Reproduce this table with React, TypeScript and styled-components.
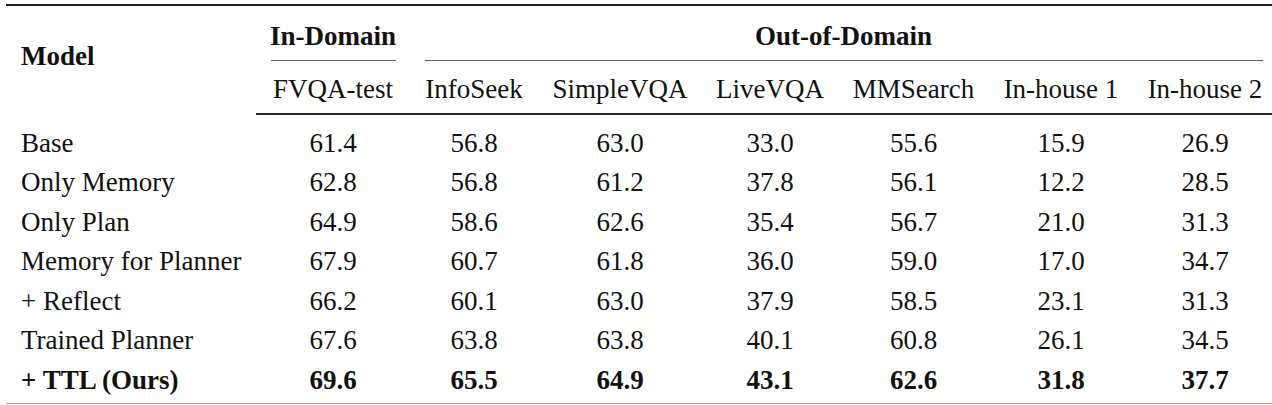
import React from 'react';
import styled, { createGlobalStyle } from 'styled-components';

type Row = {
  model: string;
  scores: string[];
  best?: boolean;
};

// 열 너비 (LaTeX 표의 열 간격을 맞춤)
const columnWidths = [250, 154, 128, 164, 136, 151, 144, 144];

const outOfDomain = ['InfoSeek', 'SimpleVQA', 'LiveVQA', 'MMSearch', 'In-house 1', 'In-house 2'];

const rows: Row[] = [
  { model: 'Base', scores: ['61.4', '56.8', '63.0', '33.0', '55.6', '15.9', '26.9'] },
  { model: 'Only Memory', scores: ['62.8', '56.8', '61.2', '37.8', '56.1', '12.2', '28.5'] },
  { model: 'Only Plan', scores: ['64.9', '58.6', '62.6', '35.4', '56.7', '21.0', '31.3'] },
  { model: 'Memory for Planner', scores: ['67.9', '60.7', '61.8', '36.0', '59.0', '17.0', '34.7'] },
  { model: '+ Reflect', scores: ['66.2', '60.1', '63.0', '37.9', '58.5', '23.1', '31.3'] },
  { model: 'Trained Planner', scores: ['67.6', '63.8', '63.8', '40.1', '60.8', '26.1', '34.5'] },
  { model: '+ TTL (Ours)', scores: ['69.6', '65.5', '64.9', '43.1', '62.6', '31.8', '37.7'], best: true },
];

const App: React.FC = () => (
  <>
    <GlobalStyle />
    <Table>
      <colgroup>
        {columnWidths.map((w, i) => (
          <col key={i} style={{ width: w }} />
        ))}
      </colgroup>
      <thead>
        <GroupRow>
          <ModelHead rowSpan={2}>Model</ModelHead>
          <GroupHead>
            In-Domain
            <CmidRule />
          </GroupHead>
          <GroupHead colSpan={6}>
            Out-of-Domain
            <CmidRule />
          </GroupHead>
        </GroupRow>
        <SubRow>
          <SubHead>FVQA-test</SubHead>
          {outOfDomain.map((name) => (
            <SubHead key={name}>{name}</SubHead>
          ))}
        </SubRow>
      </thead>
      <tbody>
        {rows.map((row) => (
          <BodyRow key={row.model} bold={row.best}>
            <ModelCell>{row.model}</ModelCell>
            {row.scores.map((s, i) => (
              <ScoreCell key={i}>{s}</ScoreCell>
            ))}
          </BodyRow>
        ))}
      </tbody>
    </Table>
  </>
);

export default App;

const GlobalStyle = createGlobalStyle`
  html, body {
    margin: 0;
    padding: 0;
    background: #ffffff;
    overflow: hidden;
  }

  body {
    padding-top: 4px;
    font-family: 'Liberation Serif', 'Times New Roman', serif;
    color: #111111;
  }
`;

const Table = styled.table`
  margin-left: 6px;
  width: 1271px;
  table-layout: fixed;
  border-spacing: 0;
  font-size: 27px;
  line-height: 26px;
`;

const GroupRow = styled.tr`
  th {
    border-top: 2px solid #1b1b1b;
  }
`;

const SubRow = styled.tr`
  th {
    border-bottom: 2px solid #2a2a2a;
  }
`;

const ModelHead = styled.th`
  text-align: left;
  vertical-align: middle;
  padding: 0 0 10px 15px;
  font-weight: 700;
`;

const GroupHead = styled.th`
  padding: 17px 0 0;
  vertical-align: top;
  font-weight: 700;
  text-align: center;
`;

const CmidRule = styled.div`
  margin: 11px 14px 0 15px;
  height: 1px;
  background: #5c5c5c;
`;

const SubHead = styled.th`
  padding: 15px 0 11px;
  font-weight: 400;
  text-align: center;
  vertical-align: middle;
`;

const BodyRow = styled.tr<{ bold?: boolean }>`
  font-weight: ${(props) => (props.bold ? 700 : 400)};

  td {
    height: 39.5px;
    padding: 0;
    vertical-align: middle;
  }

  &:first-child td {
    padding-top: 8px;
  }

  &:last-child td {
    border-bottom: 1px solid #a8a8a8;
    padding-bottom: 3px;
  }
`;

const ModelCell = styled.td`
  text-align: left;
  padding-left: 15px !important;
  white-space: nowrap;
`;

const ScoreCell = styled.td`
  text-align: center;
`;
